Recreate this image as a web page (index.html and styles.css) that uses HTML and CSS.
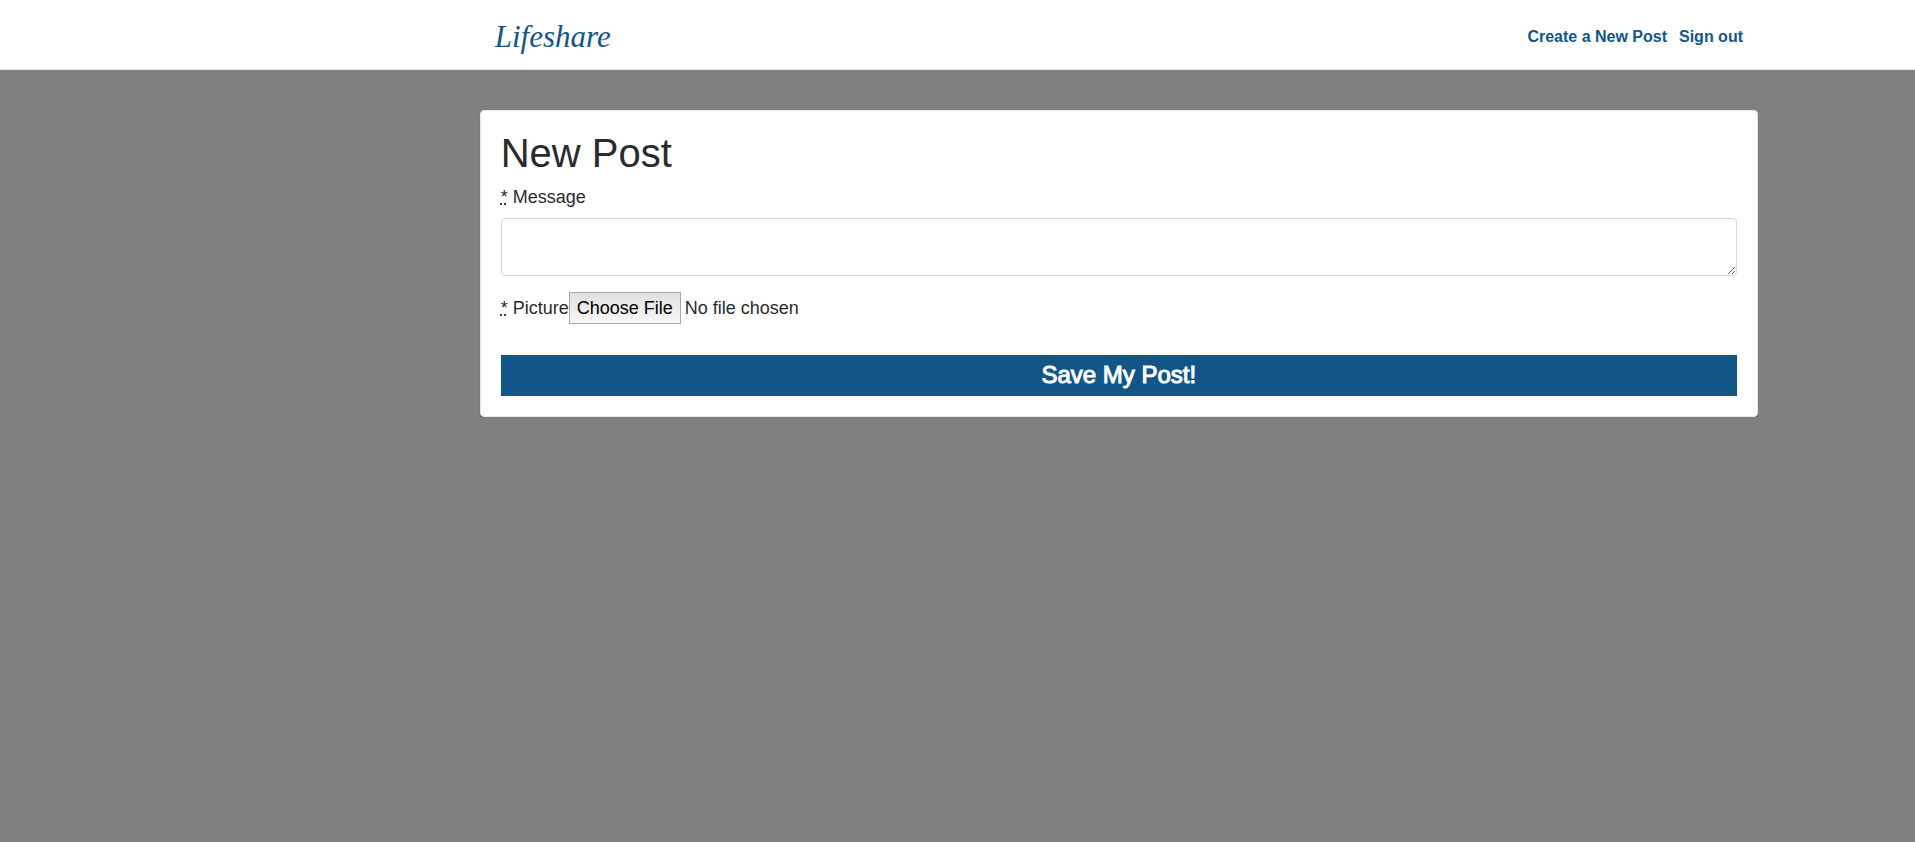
FILE: index.html
```html
<!DOCTYPE html>
<html lang="en">
<head>
<meta charset="utf-8">
<meta name="viewport" content="width=device-width, initial-scale=1">
<title>Lifeshare</title>
<link rel="stylesheet" href="styles.css">
</head>
<body>
<header class="topbar">
  <nav class="topbar-inner">
    <a class="brand" href="#">Lifeshare</a>
    <div class="links">
      <a href="#">Create a New Post</a>
      <a href="#">Sign out</a>
    </div>
  </nav>
</header>
<main class="card">
  <h1 class="title">New Post</h1>
  <form class="form">
    <label class="label" for="message"><abbr title="required">*</abbr> Message</label>
    <textarea class="message" id="message"></textarea>
    <div class="picture">
      <label for="picture"><abbr title="required">*</abbr> Picture</label>
      <input class="file" id="picture" type="file">
    </div>
    <button class="save" type="submit">Save My Post!</button>
  </form>
</main>
</body>
</html>
```

FILE: styles.css
```css
* {
  box-sizing: border-box;
}

body {
  margin: 0;
  background: #808080;
  color: #292b2c;
  font-family: "Liberation Sans", Arial, sans-serif;
  font-size: 18px;
  line-height: 28px;
}

.topbar {
  background: #fff;
  border-bottom: 1px solid #e7e7e7;
}

.topbar-inner {
  display: flex;
  align-items: center;
  justify-content: space-between;
  margin: 0 8.2% 0 25.05%;
  padding: 13px 15px 8px;
}

.brand {
  color: #125688;
  font-family: "Liberation Serif", serif;
  font-size: 31px;
  font-style: italic;
  line-height: 48px;
  text-decoration: none;
}

.links {
  display: flex;
  gap: 12px;
}

.links a {
  color: #125688;
  font-size: 16px;
  font-weight: bold;
  text-decoration: none;
}

.card {
  margin: 40px 8.2% 0 25.05%;
  padding: 20px;
  background: #fff;
  border: 1px solid #e6e6e6;
  border-radius: 4px;
  box-shadow: 0 1px 1px rgba(0, 0, 0, 0.4);
}

.title {
  margin: 0 0 8px;
  font-size: 40px;
  font-weight: normal;
  line-height: 44px;
}

.form {
  display: flex;
  flex-direction: column;
}

.label {
  margin-bottom: 7px;
}

.message {
  height: 58px;
  padding: 8px 12px;
  border: 1px solid #d9d9d9;
  border-radius: 4px;
  color: inherit;
  font: inherit;
  resize: vertical;
}

.picture {
  display: flex;
  align-items: center;
  margin: 16px 0 31px;
}

.file {
  flex: 1;
  min-width: 0;
  color: inherit;
  font: inherit;
}

.file::file-selector-button {
  height: 32px;
  margin: 0 4px 0 0;
  padding: 0 7px;
  border: 1px solid #a9a9a9;
  border-radius: 0;
  background: linear-gradient(#e0e0e0, #f7f7f7);
  color: #000;
  font: inherit;
}

.save {
  height: 41px;
  padding: 0 0 2px;
  border: 0;
  background: #125688;
  color: #fff;
  font-family: inherit;
  font-size: 24px;
  -webkit-text-stroke: 1px #fff;
}
```
